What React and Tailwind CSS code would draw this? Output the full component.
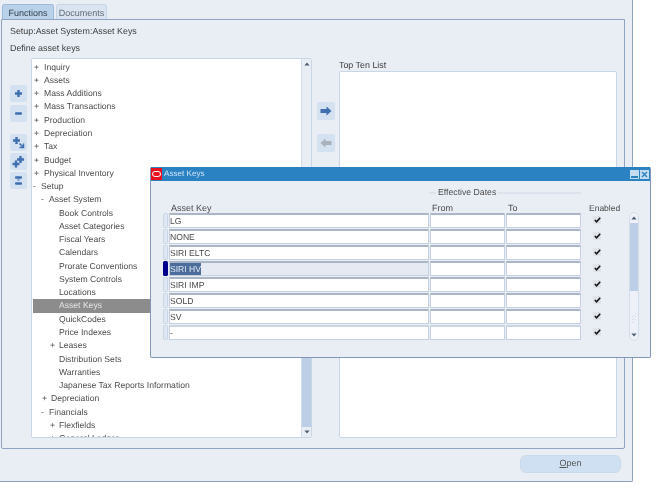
const F = { fontFamily: '"Liberation Sans", Arial, sans-serif' };

const tree = [
  [0, '+', 'Inquiry'], [0, '+', 'Assets'], [0, '+', 'Mass Additions'], [0, '+', 'Mass Transactions'],
  [0, '+', 'Production'], [0, '+', 'Depreciation'], [0, '+', 'Tax'], [0, '+', 'Budget'],
  [0, '+', 'Physical Inventory'], [1, '-', 'Setup'], [2, '-', 'Asset System'],
  [3, '', 'Book Controls'], [3, '', 'Asset Categories'], [3, '', 'Fiscal Years'], [3, '', 'Calendars'],
  [3, '', 'Prorate Conventions'], [3, '', 'System Controls'], [3, '', 'Locations'], [3, '', 'Asset Keys', true],
  [3, '', 'QuickCodes'], [3, '', 'Price Indexes'], [4, '+', 'Leases'], [3, '', 'Distribution Sets'],
  [3, '', 'Warranties'], [3, '', 'Japanese Tax Reports Information'], [5, '+', 'Depreciation'],
  [2, '-', 'Financials'], [4, '+', 'Flexfields'], [4, '+', 'General Ledger'],
];

const pad = ['pl-[1px]', 'pl-0', 'pl-[8px]', 'pl-[26px]', 'pl-[17px]', 'pl-[9px]'];
const gap = ['w-[10px]', 'w-[8px]', 'w-[8px]', 'w-0', 'w-[9px]', 'w-[9px]'];

function TreeRow({ level, sign, label, selected }) {
  return (
    <div className={`flex h-[13.27px] items-center whitespace-nowrap text-[8.6px] ${pad[level]} ${selected ? 'bg-[#8c8c8c] text-[#e6e6e6]' : 'text-[#4d4d4d]'}`}>
      {sign && <span className={`shrink-0 ${gap[level]} text-[#555]`}>{sign}</span>}
      <span>{label}</span>
    </div>
  );
}

function SideButton({ children, className = '' }) {
  return (
    <div className={`flex h-[17px] w-[17px] items-center justify-center rounded-[2px] bg-[#d3e1f1] ${className}`}>
      <svg width="13" height="13" viewBox="0 0 13 13">{children}</svg>
    </div>
  );
}

const plus = (x, y, c = '#3f6fae') => <path d={`M${x - 1.2} ${y - 3.5}h2.4v2.3h2.3v2.4h-2.3v2.3h-2.4v-2.3h-2.3v-2.4h2.3z`} fill={c} />;
const minus = (x, y) => <rect x={x - 3.5} y={y - 1.2} width="7" height="2.4" rx="1" fill="#3f6fae" />;

function ScrollEnd({ up }) {
  return (
    <div className="flex h-[10px] shrink-0 items-center justify-center">
      <svg width="6" height="4" viewBox="0 0 6 4">
        <path d={up ? 'M3 0.5L5.6 3.5H0.4z' : 'M3 3.5L5.6 0.5H0.4z'} fill="#4d5d72" />
      </svg>
    </div>
  );
}

const rows = ['LG', 'NONE', 'SIRI ELTC', 'SIRI HV', 'SIRI IMP', 'SOLD', 'SV', '-'];

function Field({ className = '', children, last, active }) {
  return (
    <div className={`flex h-[15px] items-center overflow-hidden rounded-[1px] border-t-2 border-r border-b border-l text-[8.6px] text-[#4a4a4a] ${last ? 'border-t-[#cbd6e4]' : 'border-t-[#aab5c6]'} border-r-[#c5d1e1] border-b-[#c5d1e1] border-l-[#c5d1e1] ${active ? 'bg-[#e6ebf3]' : 'bg-white'} ${className}`}>
      {children}
    </div>
  );
}

function Check() {
  return (
    <div className="flex h-[8px] w-[8px] items-center justify-center bg-[#dfe3e8]">
      <svg width="7" height="6" viewBox="0 0 7 6"><path d="M0.8 3L2.6 4.8L6.2 0.8" fill="none" stroke="#111" strokeWidth="1.5" /></svg>
    </div>
  );
}

function AssetKeysWindow() {
  return (
    <div className="absolute left-[150px] top-[167px] h-[191px] w-[501px] rounded-[2px] border-r border-b border-l border-[#8296b8] bg-[#e9eef5]">
      <div className="flex h-[14px] items-center bg-[#2b82c3] text-[8.1px] text-[#cfe6f7]">
        <div className="flex h-[12px] w-[11px] items-center justify-center bg-[#e8101c]">
          <div className="h-[6px] w-[9px] rounded-[3px] border-[1.5px] border-white" />
        </div>
        <span className="ml-[2px]">Asset Keys</span>
        <div className="ml-auto mr-[1px] flex gap-[1px]">
          <div className="flex h-[9px] w-[9px] items-end justify-center bg-[#c3dcf0] pb-[1px]"><div className="h-[2px] w-[7px] bg-[#2b82c3]" /></div>
          <div className="flex h-[9px] w-[9px] items-center justify-center bg-[#c3dcf0]">
            <svg width="7" height="7" viewBox="0 0 7 7"><path d="M1 1L6 6M6 1L1 6" stroke="#2b82c3" strokeWidth="1.4" /></svg>
          </div>
        </div>
      </div>
      <div className="ml-[278px] mt-[7px] flex h-[10px] w-[152px] items-center text-[8.7px] text-[#4a4a4a]">
        <div className="h-[2px] w-[7px] bg-[#dce3ec]" />
        <span className="px-[2px]">Effective Dates</span>
        <div className="h-[2px] flex-1 bg-[#dce3ec]" />
      </div>
      <div className="relative ml-[12px] mt-[5px]">
        <div className="grid h-[9px] grid-cols-[5px_260px_75px_75px_48px] gap-x-[1px] text-[9px] leading-[11px] text-[#4a4a4a]">
          <div />
          <div className="pl-[2px]">Asset Key</div>
          <div className="pl-[2px]">From</div>
          <div className="pl-[2px]">To</div>
          <div className="whitespace-nowrap pl-[7px] text-[8.5px]">Enabled</div>
        </div>
        <div className="flex flex-col">
          {rows.map((r, i) => (
            <div key={r} className="grid h-[16px] grid-cols-[5px_260px_75px_75px_48px] gap-x-[1px] pt-[1px]">
              <div className={`h-[15px] rounded-[1.5px] ${i === 3 ? 'bg-[#00008b]' : 'border border-[#c9d6e6] bg-[#dde6f1]'}`} />
              <Field active={i === 3} last={i === 7}>
                {i === 3 ? <span className="bg-[#4a6d9c] text-[#dfe7f1]">{r}</span> : r}
              </Field>
              <Field last={i === 7} />
              <Field last={i === 7} />
              <div className="flex items-center pb-[1px] pl-[11px]"><Check /></div>
            </div>
          ))}
        </div>
        <div className="absolute left-[466px] top-[9px] flex h-[129px] w-[10px] flex-col rounded-[5px] border border-[#d3deea] bg-[#eef2f8]">
          <ScrollEnd up />
          <div className="h-[68px] shrink-0 bg-[#bccfe6]" />
          <div className="flex flex-1 items-end justify-center pb-[6px]">
            <svg width="6" height="12" viewBox="0 0 6 12"><path d="M1 5L5 1M1 11L5 7M1 8L5 4" stroke="#bcc8d6" strokeWidth="0.8" strokeDasharray="1 1" /></svg>
          </div>
          <ScrollEnd />
        </div>
      </div>
    </div>
  );
}

export default function App() {
  return (
    <div className="relative h-[488px] w-[660px] overflow-hidden bg-white text-[8.9px] blur-[0.3px] [text-rendering:geometricPrecision]" style={F}>
      <div className="flex h-[482px] w-[633px] flex-col rounded-br-[2px] border-r border-b border-[#8fa3c2] bg-[#e9eef5]">
        <div className="flex h-[19px] items-end pl-[2px]">
          <div className="flex h-[15px] w-[52px] items-center justify-center rounded-t-[3px] border-t border-r border-l border-[#9dbbd8] bg-[#b9d2e9] pt-[3px] text-[9px] text-[#33404f]">Functions</div>
          <div className="ml-[2px] flex h-[15px] w-[51px] items-center justify-center rounded-t-[3px] border-t border-r border-l border-[#c7d6e6] bg-[#d9e4f0] pt-[3px] text-[9px] text-[#5f6b78]">Documents</div>
        </div>
        <div className="ml-[1px] flex h-[430px] w-[624px] flex-col rounded-b-[2px] border-t border-r border-b border-l border-[#8fa3c2]">
          <div className="ml-[8px] mt-[5px] h-[12px] leading-[12px] text-[#3c3c3c]">Setup:Asset System:Asset Keys</div>
          <div className="ml-[8px] mt-[5px] h-[12px] leading-[12px] text-[#3c3c3c]">Define asset keys</div>
          <div className="mt-[3px] flex">
            <div className="ml-[8px] flex w-[17px] flex-col pt-[28px]">
              <SideButton>{plus(6.5, 6.5)}</SideButton>
              <SideButton className="mt-[3px]">{minus(6.5, 6.5)}</SideButton>
              <SideButton className="mt-[12px]">
                {plus(4.5, 4.5)}
                <path d="M7.5 7.5L11 11M11.5 7.5V11.5H7.5" stroke="#3f6fae" strokeWidth="1.5" fill="none" />
              </SideButton>
              <SideButton className="mt-[2px]">
                {plus(8.5, 4.5)}
                {plus(4, 9)}
              </SideButton>
              <SideButton className="mt-[2px]">
                {minus(6.5, 3.5)}
                {minus(6.5, 9.5)}
                <rect x="5.5" y="5.4" width="2" height="1.2" fill="#3f6fae" />
              </SideButton>
            </div>
            <div className="ml-[4px] mt-[1px] flex h-[380px] w-[281px] overflow-hidden rounded-[2px] border border-[#c9d6e6] bg-white">
              <div className="min-w-0 flex-1 overflow-hidden pl-[1px] pt-[1.5px]">
                {tree.map(([l, s, t, sel], i) => (
                  <TreeRow key={i} level={l} sign={s} label={t} selected={sel} />
                ))}
              </div>
              <div className="flex w-[10px] shrink-0 flex-col border-l border-[#d3deea] bg-[#e9eef5]">
                <ScrollEnd up />
                <div className="h-[120px] shrink-0" />
                <div className="flex-1 bg-[#bccfe6]" />
                <ScrollEnd />
              </div>
            </div>
            <div className="ml-[5px] flex w-[18px] flex-col pt-[45px]">
              <div className="flex h-[18px] w-[18px] items-center justify-center rounded-[2px] bg-[#d3e1f1]">
                <svg width="12" height="10" viewBox="0 0 12 10"><path d="M0.5 3H6.5V0.5L11.5 5L6.5 9.5V7H0.5z" fill="#3f6fae" /></svg>
              </div>
              <div className="mt-[14px] flex h-[18px] w-[18px] items-center justify-center rounded-[2px] bg-[#d3e1f1]">
                <svg width="12" height="10" viewBox="0 0 12 10"><path d="M11.5 3H5.5V0.5L0.5 5L5.5 9.5V7H11.5z" fill="#a9b1ba" /></svg>
              </div>
            </div>
            <div className="ml-[4px] flex w-[278px] flex-col">
              <div className="mt-[2px] h-[12px] leading-[13px] text-[#3c3c3c]">Top Ten List</div>
              <div className="h-[367px] rounded-[2px] border border-[#c9d6e6] bg-white" />
            </div>
          </div>
        </div>
        <div className="flex flex-1 items-start justify-end pr-[11px] pt-[6px]">
          <div className="flex h-[18px] w-[101px] items-center justify-center rounded-[6px] border border-[#c9d9ec] bg-[#cfe0f2] text-[9px] text-[#555]">
            <span className="underline">O</span>pen
          </div>
        </div>
      </div>
      <AssetKeysWindow />
    </div>
  );
}
